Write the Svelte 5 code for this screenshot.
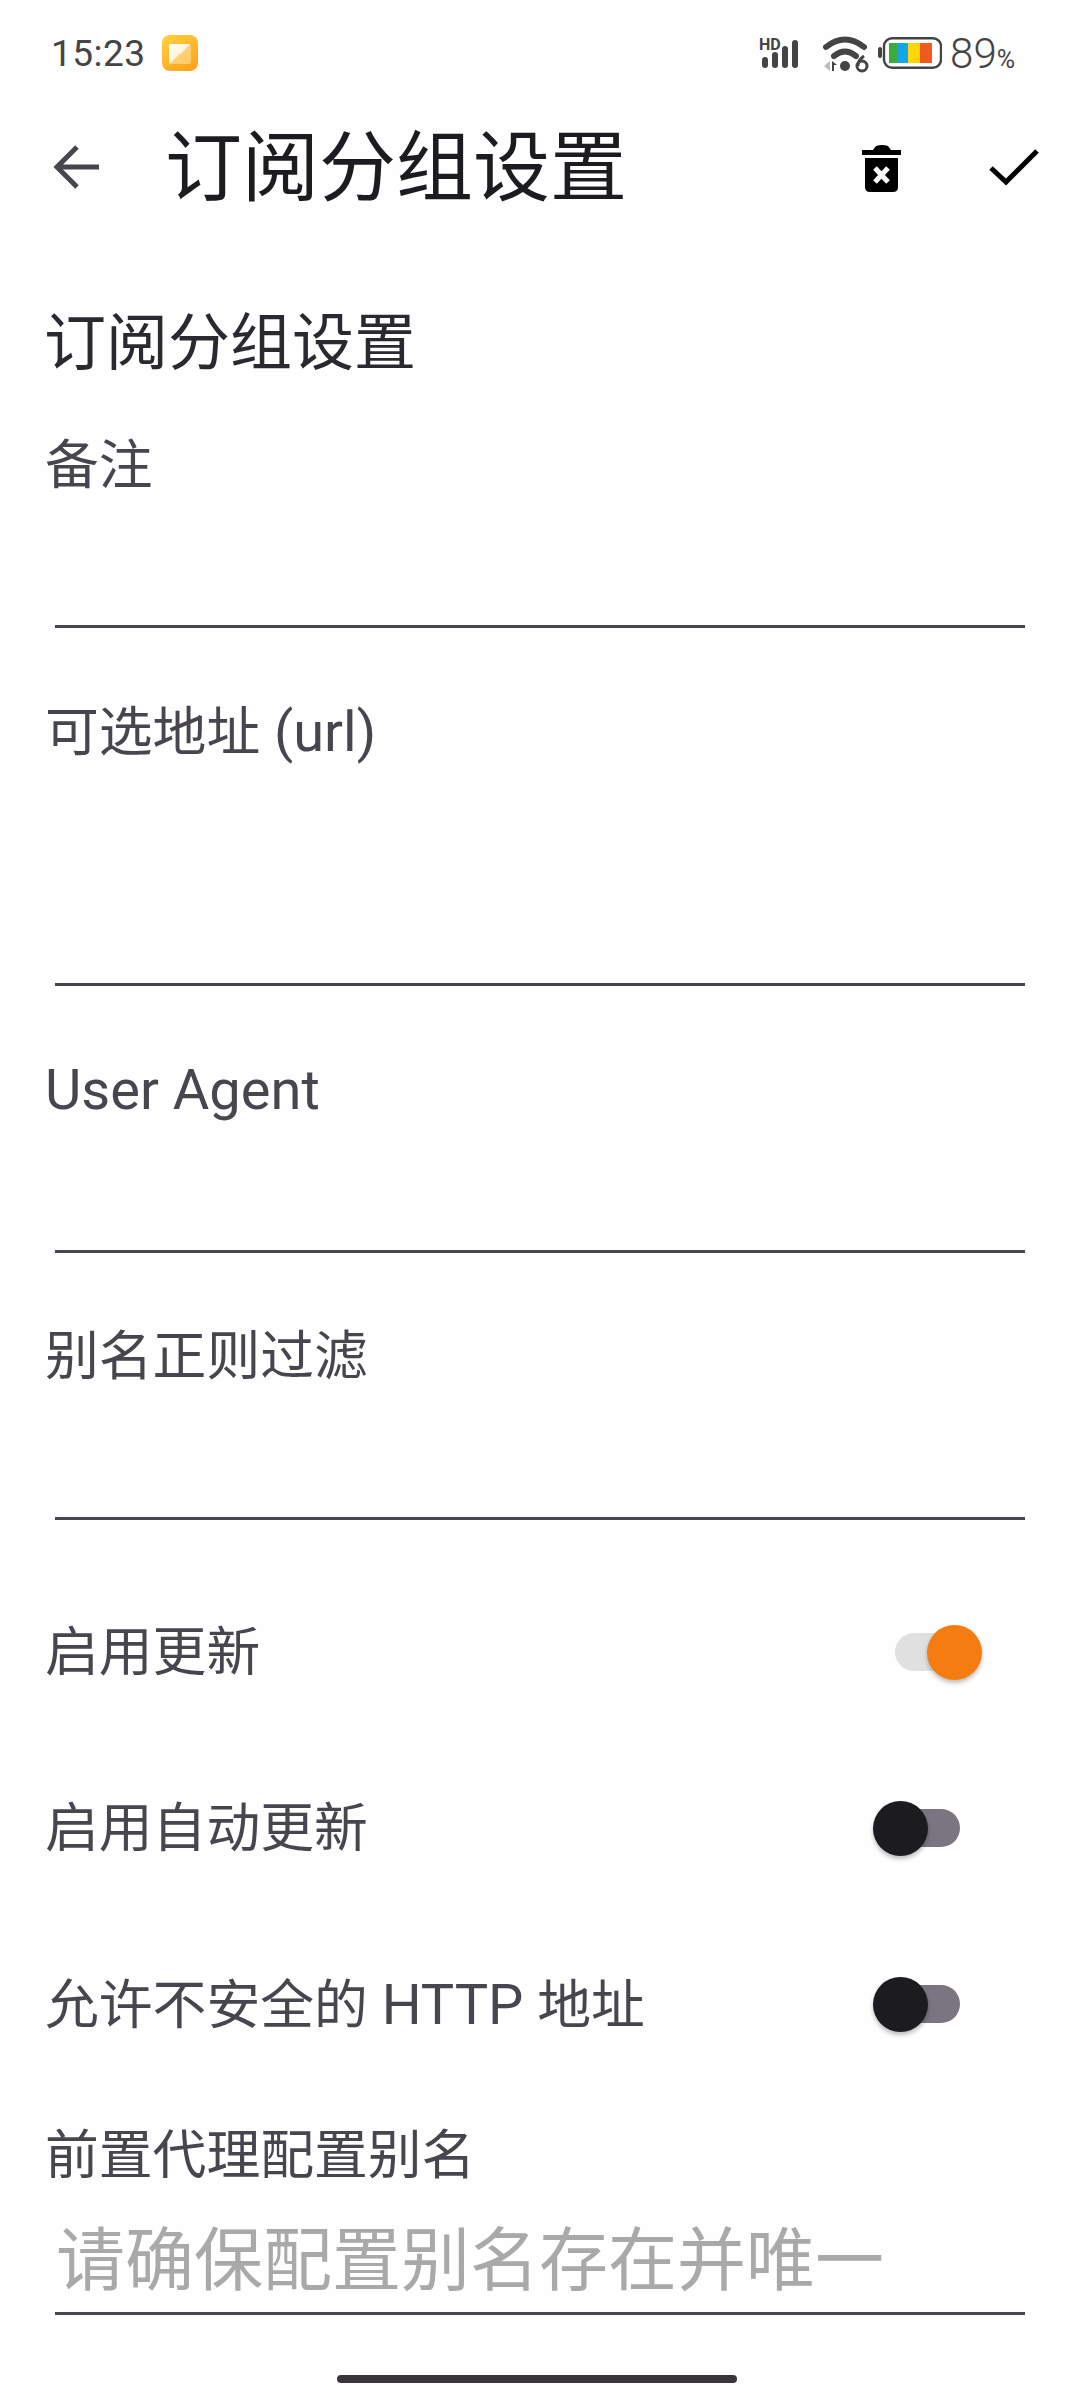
<script>
  const fields = [
    { parts: [['备注', false]], cls: 'f1' },
    { parts: [['可选地址', false], [' (url)', true]], cls: 'f2' },
    { parts: [['User Agent', true]], cls: 'f3' },
    { parts: [['别名正则过滤', false]], cls: 'f3' }
  ];
  const toggles = [
    { parts: [['启用更新', false]], on: true },
    { parts: [['启用自动更新', false]], on: false },
    { parts: [['允许不安全的', false], [' HTTP ', true], ['地址', false]], on: false }
  ];
</script>

{#snippet label(parts)}
  <div class="label">{#each parts as p}<span class:lat={p[1]}>{p[0]}</span>{/each}</div>
{/snippet}

<div class="page">
  <div class="status">
    <span class="time">15:23</span>
    <svg class="appicon" width="36" height="36" viewBox="0 0 36 36">
      <defs>
        <linearGradient id="g" x1="0" y1="0" x2="0.6" y2="1"><stop offset="0" stop-color="#ffd23f"/><stop offset="1" stop-color="#ffa51f"/></linearGradient>
        <linearGradient id="h" x1="0" y1="0" x2="1" y2="1"><stop offset="0" stop-color="#fff"/><stop offset="0.5" stop-color="#fff3d6"/><stop offset="0.5" stop-color="#ffd07a"/><stop offset="1" stop-color="#ffc95f"/></linearGradient>
      </defs>
      <rect width="36" height="36" rx="8" fill="url(#g)"/>
      <rect x="7" y="9" width="22" height="20" rx="2" fill="url(#h)"/>
    </svg>
    <span class="grow"></span>
    <svg class="sig" width="42" height="32" viewBox="0 0 42 32" fill="#444">
      <text x="0" y="13" class="hd">HD</text>
      <rect x="3" y="20" width="6" height="11" rx="3"/>
      <rect x="13" y="15" width="6" height="16" rx="3"/>
      <rect x="23" y="9" width="6" height="22" rx="3"/>
      <rect x="33" y="3" width="6" height="28" rx="3"/>
    </svg>
    <svg class="wifi" width="48" height="38" viewBox="0 0 48 38" fill="none">
      <path d="M3 11 Q22 -4 41 11" stroke="#444" stroke-width="6" stroke-linecap="round"/>
      <path d="M11 20 Q22 11 33 20" stroke="#444" stroke-width="6" stroke-linecap="round"/>
      <circle cx="22" cy="30" r="5" fill="#444"/>
      <path d="M1 30 L7 25 V35 Z" fill="#bbb"/>
      <path d="M9 35 V25 L14 29 H11 V35 Z" fill="#444"/>
      <circle cx="39" cy="30" r="5" stroke="#444" stroke-width="3"/>
      <path d="M35 30 Q35 24 41 20" stroke="#444" stroke-width="3"/>
    </svg>
    <svg class="batt" width="64" height="32" viewBox="0 0 64 32">
      <rect x="0" y="10" width="4" height="11" rx="2" fill="#444"/>
      <rect x="6" y="1.2" width="57" height="29.6" rx="8" fill="none" stroke="#444" stroke-width="2.4"/>
      <rect x="11" y="6" width="8" height="20" fill="#3cab3f"/>
      <rect x="19" y="6" width="11" height="20" fill="#12a5ea"/>
      <rect x="30" y="6" width="12" height="20" fill="#ffd60a"/>
      <rect x="42" y="6" width="12" height="20" fill="#f0591f"/>
    </svg>
    <span class="pct">89<small>%</small></span>
  </div>

  <div class="bar">
    <svg class="back" width="48" height="48" viewBox="0 0 48 48" fill="none">
      <path d="M47 24 H6 M25 4 L5 24 L25 44" stroke="#48454e" stroke-width="5"/>
    </svg>
    <div class="title">订阅分组设置</div>
    <svg class="trash" width="40" height="50" viewBox="0 0 40 50">
      <path d="M0 8 H11 L14 4 Q20 2 26 4 L29 8 H39 V13 H0 Z M3 16 H36 V45 Q36 50 31 50 H8 Q3 50 3 45 Z" fill="#000"/>
      <path d="M13 26 L26 40 M26 26 L13 40" stroke="#fff" stroke-width="5"/>
    </svg>
    <svg class="check" width="50" height="38" viewBox="0 0 50 38" fill="none">
      <path d="M2 20 L17 34 L48 3" stroke="#000" stroke-width="5"/>
    </svg>
  </div>

  <div class="section">订阅分组设置</div>

  {#each fields as f}
    <div class="field {f.cls}">
      {@render label(f.parts)}
      <div class="line"></div>
    </div>
  {/each}

  <div class="toggles">
    {#each toggles as t}
      <div class="row">
        {@render label(t.parts)}
        <div class="switch" class:on={t.on}><span class="knob"></span></div>
      </div>
    {/each}
  </div>

  <div class="proxy">
    {@render label([['前置代理配置别名', false]])}
    <div class="hint">请确保配置别名存在并唯一</div>
    <div class="line"></div>
  </div>

  <div class="home"></div>
</div>

<style>
  :global(body) { margin: 0; background: #fff; }
  .page {
    width: 1080px; height: 2400px; overflow: hidden; background: #fefefe;
    font-family: "Roboto", "Noto Sans CJK SC", sans-serif;
    display: flex; flex-direction: column;
  }
  .status { height: 104px; display: flex; align-items: center; padding: 2px 64px 0 51px; box-sizing: border-box; color: #444; }
  .time { font-size: 37px; width: 89px; letter-spacing: 0.5px; }
  .appicon { margin-left: 22px; }
  .grow { flex: 1; }
  .hd { font: 700 16px "Roboto", sans-serif; }
  .sig { margin-right: 22px; overflow: visible; }
  .wifi { margin-right: 7px; margin-top: 4px; }
  .batt { margin-right: 8px; }
  .pct { font-size: 42px; font-weight: 300; padding-right: 1px; }
  .pct small { font-size: 25px; font-weight: 400; }
  .bar { height: 126px; display: flex; align-items: center; padding: 0 41px 0 52px; }
  .back { margin-right: 65px; }
  .title { font-size: 77px; color: #1c1b1f; flex: 1; line-height: 1; padding-top: 5px; }
  .trash { margin-right: 87px; }
  .section { font-size: 62px; color: #2b2930; padding: 0 0 0 44px; margin-top: 69px; line-height: 90px; }
  .label { font-size: 53.8px; color: #48454e; line-height: 70px; font-weight: 400; padding-top: 2px; }
  .lat { font-size: 56px; }
  .field { padding: 0 55px 0 45px; display: flex; flex-direction: column; box-sizing: border-box; }
  .field .label { margin-top: 67px; }
  .field.f1 { height: 239px; }
  .field.f1 .label { margin-top: 40px; }
  .f2 { height: 358px; }
  .f3 { height: 267px; }
  .line { height: 3px; background: #48454e; margin-left: 10px; margin-top: auto; }
  .toggles { margin-top: 44px; }
  .row { height: 176px; display: flex; align-items: center; justify-content: space-between; padding: 0 120px 0 45px; }
  .switch { position: relative; width: 65px; height: 38px; border-radius: 19px; background: #7a7580; }
  .knob { position: absolute; width: 55px; height: 55px; border-radius: 50%; left: -22px; top: -8.5px; background: #1c1b1f; box-shadow: 0 3px 4px rgba(0,0,0,.25); }
  .switch.on { background: #e0e0e0; }
  .switch.on .knob { left: 32px; background: #f57c11; }
  .proxy { padding: 0 55px 0 45px; margin-top: 27px; }
  .hint { font-size: 69px; color: #a9a9a9; margin-left: 11px; line-height: 96px; margin-top: 23px; }
  .proxy .line { margin-top: 2px; }
  .home { width: 400px; height: 8px; border-radius: 4px; background: #38363b; margin: 60px 0 0 337px; }
</style>
